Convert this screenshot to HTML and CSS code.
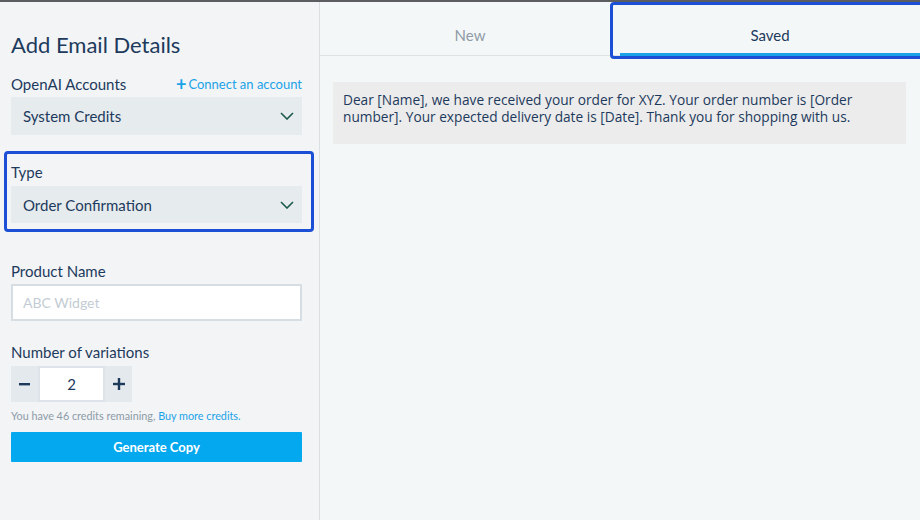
FILE: index.html
```html
<!DOCTYPE html>
<html>
<head>
<meta charset="utf-8">
<link rel="stylesheet" href="styles.css">
</head>
<body>
<div class="topbar"></div>
<div class="app">
  <aside class="left">
    <h1 class="title">Add Email Details</h1>
    <div class="label-row">
      <span class="label">OpenAI Accounts</span>
      <a class="connect"><span class="plus">+</span>Connect an account</a>
    </div>
    <div class="select">
      <span>System Credits</span>
      <svg class="chev" width="14" height="8" viewBox="0 0 14 8"><path d="M1 1l6 6 6-6" fill="none" stroke="#1c5a4c" stroke-width="1.6"/></svg>
    </div>
    <div class="focus-ring">
      <div class="label label-only">Type</div>
      <div class="select">
        <span>Order Confirmation</span>
        <svg class="chev" width="14" height="8" viewBox="0 0 14 8"><path d="M1 1l6 6 6-6" fill="none" stroke="#1c5a4c" stroke-width="1.6"/></svg>
      </div>
    </div>
    <div class="label label-only product-label">Product Name</div>
    <div class="input"><span class="placeholder">ABC Widget</span></div>
    <div class="label label-only num-label">Number of variations</div>
    <div class="stepper">
      <div class="step-btn">
        <svg width="11" height="3" viewBox="0 0 11 3"><rect width="11" height="2.4" fill="#1d3a5c"/></svg>
      </div>
      <div class="step-val">2</div>
      <div class="step-btn">
        <svg width="12" height="12" viewBox="0 0 12 12"><rect y="4.8" width="12" height="2.4" fill="#1d3a5c"/><rect x="4.8" width="2.4" height="12" fill="#1d3a5c"/></svg>
      </div>
    </div>
    <p class="credits">You have 46 credits remaining, <a class="buy">Buy more credits.</a></p>
    <button class="generate">Generate Copy</button>
  </aside>
  <main class="right">
    <div class="tabs">
      <div class="tab">New</div>
      <div class="tab active">Saved<span class="tab-ring"></span></div>
    </div>
    <div class="result">Dear [Name], we have received your order for XYZ. Your order number is [Order number]. Your expected delivery date is [Date]. Thank you for shopping with us.</div>
  </main>
</div>
</body>
</html>
```
FILE: styles.css
```css
* { box-sizing: border-box; }
html, body { margin: 0; padding: 0; }
body {
  width: 920px;
  height: 520px;
  overflow: hidden;
  font-family: "Lato", "Open Sans", sans-serif;
  color: #1d3a5c;
  background: #f4f7f8;
}
.topbar { height: 2px; background: #5b5d60; }
.app { display: flex; height: 518px; }
.left {
  width: 320px;
  background: #f2f4f6;
  border-right: 1px solid #dcdfe2;
  padding: 30px 17px 0 11px;
  display: flex;
  flex-direction: column;
}
.title {
  margin: 0;
  font-size: 22px;
  line-height: 26px;
  font-weight: 400;
  color: #1d3a5c;
}
.label-row {
  margin-top: 17px;
  display: flex;
  justify-content: space-between;
  align-items: center;
  height: 18px;
}
.label { font-size: 15px; line-height: 18px; color: #1d3a5c; }
.connect {
  font-size: 13px;
  color: #1aa3e8;
  display: flex;
  align-items: center;
}
.plus { font-size: 18px; font-weight: 700; margin-right: 2px; line-height: 14px; }
.select {
  margin-top: 4px;
  height: 38px;
  background: #e6ebee;
  display: flex;
  align-items: center;
  justify-content: space-between;
  padding: 0 8px 0 12px;
  font-size: 15px;
  color: #1d3a5c;
}
.focus-ring {
  margin: 16px -12px 0 -7px;
  border: 3px solid #1a4fd6;
  border-radius: 4px;
  padding: 9px 9px 6px 4px;
}
.focus-ring .select { margin-top: 5px; height: 37px; }
.label-only { height: 18px; }
.product-label { margin-top: 30px; }
.input {
  margin-top: 4px;
  height: 37px;
  background: #fff;
  border: 2px solid #d6dde3;
  display: flex;
  align-items: center;
  padding-left: 10px;
}
.placeholder { font-size: 14px; color: #c3ccd4; }
.num-label { margin-top: 22px; }
.stepper {
  margin-top: 5px;
  display: flex;
  height: 36px;
  width: 121px;
}
.step-btn {
  width: 27px;
  background: #e3e9ec;
  display: flex;
  align-items: center;
  justify-content: center;
}
.step-val {
  width: 67px;
  background: #fff;
  border: 2px solid #dde3e8;
  display: flex;
  align-items: center;
  justify-content: center;
  font-size: 15px;
  color: #1d3a5c;
}
.credits {
  margin: 7px 0 0;
  font-size: 10.8px;
  line-height: 14px;
  color: #8d9ba6;
}
.buy { color: #1aa3e8; }
.generate {
  margin-top: 9px;
  height: 30px;
  border: none;
  background: #04a8ef;
  color: #fff;
  font-family: inherit;
  font-size: 13px;
  font-weight: 700;
  border-radius: 1px;
}
.right { flex: 1; display: flex; flex-direction: column; background: #f4f7f8; }
.tabs {
  display: flex;
  height: 54px;
  border-bottom: 1px solid #dde2e5;
}
.tab {
  flex: 1;
  text-align: center;
  padding-top: 24px;
  font-size: 15px;
  line-height: 18px;
  color: #8f9ca6;
  position: relative;
}
.tab.active {
  color: #1d3a5c;
  border-bottom: 3px solid #1aa3e8;
  margin-bottom: -1px;
}
.tab-ring {
  position: absolute;
  left: -10px;
  top: 0;
  right: -10px;
  bottom: -6px;
  border: 3px solid #1a4fd6;
  border-radius: 4px;
}
.result {
  margin: 26px 14px 0 13px;
  background: #ececec;
  padding: 9px 10px 19px 10px;
  font-family: "Open Sans", sans-serif;
  font-size: 13.7px;
  line-height: 17px;
  color: #1d3a5c;
}
```
